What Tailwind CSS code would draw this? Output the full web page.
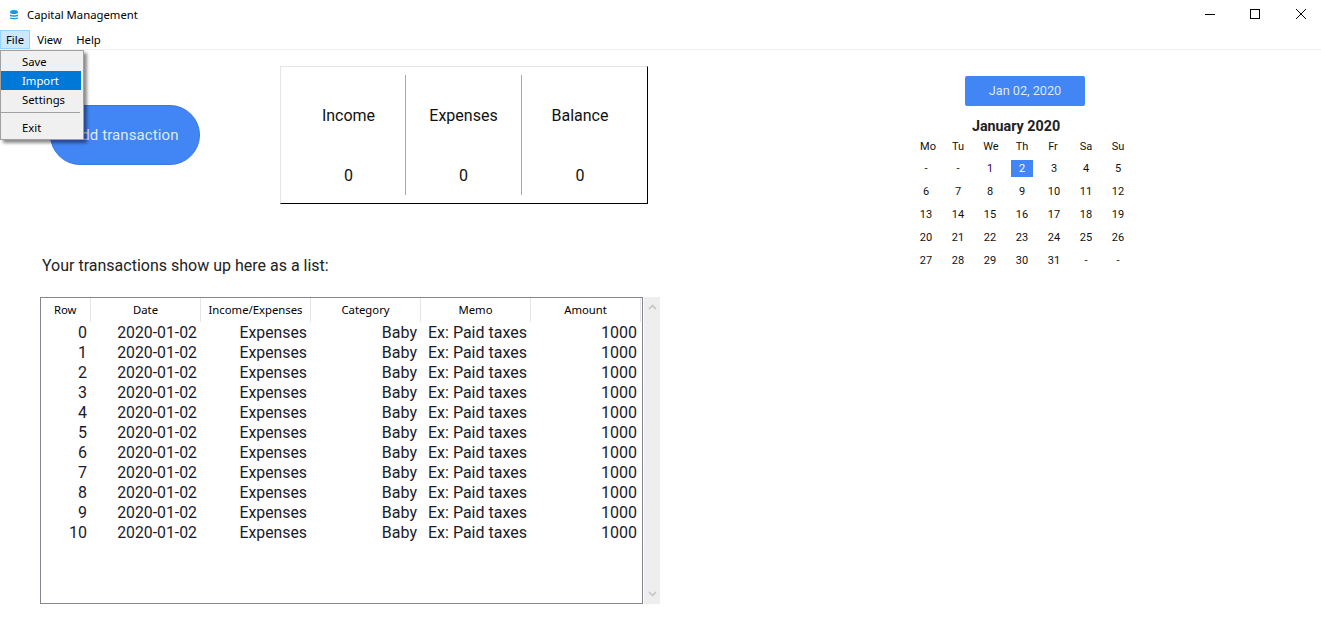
<!DOCTYPE html>
<html lang="en">
<head>
  <meta charset="UTF-8" />
  <title>Capital Management</title>
  <script src="https://cdn.jsdelivr.net/npm/@tailwindcss/browser@4"></script>
</head>
<body class="bg-white h-[631px] w-[1321px] overflow-hidden font-['Roboto',sans-serif] text-[#111]">
  <!-- title bar -->
  <header class="h-[30px] flex items-center font-['Noto_Sans',sans-serif] text-[11.3px] text-black">
    <svg class="ml-[8px] w-[12px] h-[12px]" viewBox="0 0 12 12">
      <ellipse cx="6" cy="3" rx="4" ry="2" fill="#1a97e0" />
      <path d="M2 5.200c1 1.300 7 1.300 8 0v1.600c-1 1.300-7 1.300-8 0z" fill="#1a97e0" />
      <path d="M2 8c1 1.300 7 1.300 8 0v1.200c-1 1.500-7 1.500-8 0z" fill="#1a97e0" />
    </svg>
    <span class="ml-[7px]">Capital Management</span>
    <div class="ml-auto flex items-center">
      <svg class="w-[46px] h-[30px]" viewBox="0 0 46 30"><path d="M22 14.500h10" stroke="#000" fill="none" /></svg>
      <svg class="w-[46px] h-[30px]" viewBox="0 0 46 30"><rect x="21.500" y="9.500" width="9" height="9" stroke="#000" fill="none" /></svg>
      <svg class="w-[46px] h-[30px]" viewBox="0 0 46 30"><path d="M21 9l10 10M31 9l-10 10" stroke="#000" fill="none" /></svg>
    </div>
  </header>

  <!-- menu bar -->
  <nav class="h-[20px] flex border-b border-[#f0f0f0] font-['Noto_Sans',sans-serif] text-[11.3px] text-black">
    <div class="w-[30px] h-[19px] pt-[2px] flex items-center justify-center bg-[#cce8ff] border border-[#99d1ff]">File</div>
    <div class="w-[39px] h-[19px] pt-[2px] flex items-center justify-center">View</div>
    <div class="w-[39px] h-[19px] pt-[2px] flex items-center justify-center">Help</div>
  </nav>

  <div class="relative flex">
    <!-- file menu -->
    <div class="absolute left-0 top-0 z-10 w-[84px] h-[90px] pt-px bg-[#f0f0f0] border border-[#a0a0a0] shadow-[3px_3px_3px_rgba(0,0,0,0.45)] font-['Noto_Sans',sans-serif] text-[11.3px] text-black">
      <div class="h-[19px] pt-[2px] pl-[21px] flex items-center">Save</div>
      <div class="h-[19px] pt-[2px] w-[80px] pl-[21px] flex items-center bg-[#0078d7] text-white">Import</div>
      <div class="h-[19px] pt-[2px] pl-[21px] flex items-center">Settings</div>
      <div class="mt-[3px] mb-[5px] h-px w-[79px] bg-[#a0a0a0]"></div>
      <div class="h-[19px] pt-[2px] pl-[21px] flex items-center">Exit</div>
    </div>

    <!-- left side -->
    <main class="w-[660px] shrink-0">
      <div class="flex pt-[16px]">
        <button class="ml-[50px] mt-[39px] w-[150px] h-[60px] rounded-[30px] bg-[#4285f4] border border-[#3b78dc] text-[#dfe9fb] text-[15px] tracking-[0.1px]">Add transaction</button>
        <section class="ml-[80px] w-[368px] h-[138px] flex px-px pt-[8px] pb-[8px] border-t border-l border-t-[#e5e5e5] border-l-[#e5e5e5] border-r border-b border-r-black border-b-black">
          <div class="w-[124px] pl-[10px] flex flex-col items-center text-[16px] leading-[24px] border-r border-[#a8a8a8]">
            <span class="mt-[29px]">Income</span>
            <span class="mt-[36px]">0</span>
          </div>
          <div class="w-[116px] flex flex-col items-center text-[16px] leading-[24px] border-r border-[#a8a8a8]">
            <span class="mt-[29px]">Expenses</span>
            <span class="mt-[36px]">0</span>
          </div>
          <div class="w-[116px] flex flex-col items-center text-[16px] leading-[24px]">
            <span class="mt-[29px]">Balance</span>
            <span class="mt-[36px]">0</span>
          </div>
        </section>
      </div>

      <p class="ml-[42px] mt-[52px] text-[16px] leading-[20px] text-[#222]">Your transactions show up here as a list:</p>

      <div class="ml-[40px] mt-[21px] flex">
        <div class="w-[603px] h-[307px] border border-[#85858f] bg-white">
          <table class="table-fixed border-collapse w-[599px] text-[16px] leading-[19px] text-[#1a1a2a]">
            <thead>
              <tr class="h-[24px] font-['Noto_Sans',sans-serif] text-[11.3px] text-black">
                <th class="w-[49px] pb-[2px] font-normal border-r border-[#e5e5e5]">Row</th>
                <th class="w-[110px] pb-[2px] pl-px font-normal border-r border-[#e5e5e5]">Date</th>
                <th class="w-[110px] pb-[2px] pl-px font-normal border-r border-[#e5e5e5]">Income/Expenses</th>
                <th class="w-[110px] pb-[2px] pl-px font-normal border-r border-[#e5e5e5]">Category</th>
                <th class="w-[110px] pb-[2px] pl-px font-normal border-r border-[#e5e5e5]">Memo</th>
                <th class="w-[110px] pb-[2px] pl-px font-normal border-r border-[#e5e5e5]">Amount</th>
              </tr>
            </thead>
            <tbody id="rows"></tbody>
          </table>
        </div>
        <div class="ml-px w-[16px] h-[307px] bg-[#eeeeee] flex flex-col items-center justify-between py-[7px]">
          <svg class="w-[9px] h-[6px]" viewBox="0 0 9 6"><path d="M1 5l3.500-3.500L8 5" stroke="#c2c2c2" stroke-width="1.500" fill="none" /></svg>
          <svg class="w-[9px] h-[6px]" viewBox="0 0 9 6"><path d="M1 1l3.500 3.500L8 1" stroke="#c2c2c2" stroke-width="1.500" fill="none" /></svg>
        </div>
      </div>
    </main>

    <!-- calendar -->
    <aside class="ml-[250px] w-[224px] pt-[26px]">
      <button class="ml-[55px] block w-[120px] h-[30px] rounded-[2px] bg-[#4285f4] text-[#dfe9fb] text-[12.7px]">Jan 02, 2020</button>
      <div class="ml-[62px] mt-[12px] w-[88px] h-[17px] pt-px flex items-center justify-center whitespace-nowrap text-[14.300px] font-bold text-[#222]">January 2020</div>
      <div id="cal" class="mt-px grid grid-cols-[repeat(7,32px)] text-[11px] text-center items-center text-[#111]">
        <div class="h-[21px] leading-[21px] pl-[4px]">Mo</div>
        <div class="h-[21px] leading-[21px]">Tu</div>
        <div class="h-[21px] leading-[21px] pl-[2px]">We</div>
        <div class="h-[21px] leading-[21px]">Th</div>
        <div class="h-[21px] leading-[21px] pr-[2px]">Fr</div>
        <div class="h-[21px] leading-[21px]">Sa</div>
        <div class="h-[21px] leading-[21px]">Su</div>
      </div>
    </aside>
  </div>

  <script>
    const rows = document.getElementById('rows');
    for (let i = 0; i <= 10; i++) {
      rows.insertAdjacentHTML('beforeend', `<tr class="h-[20px]">
        <td class="text-right pt-px pr-[3px]">${i}</td>
        <td class="text-right pt-px pr-[3px] text-[15.800px]">2020-01-02</td>
        <td class="text-right pt-px pr-[3px] text-[15.800px]">Expenses</td>
        <td class="text-right pt-px pr-[3px]">Baby</td>
        <td class="text-left pt-px pl-[8px]">Ex: Paid taxes</td>
        <td class="text-right pt-px pr-[3px]">1000</td>
      </tr>`);
    }

    const cal = document.getElementById('cal');
    const days = ['-', '-', 1, 2, 3, 4, 5, 6, 7, 8, 9, 10, 11, 12, 13, 14, 15, 16, 17, 18, 19, 20, 21, 22, 23, 24, 25, 26, 27, 28, 29, 30, 31, '-', '-'];
    days.forEach(d => {
      let cell = `<div class="h-[23px] leading-[23px]">${d}</div>`;
      if (d === 1) cell = `<div class="h-[23px] leading-[23px] text-[#40005a]">${d}</div>`;
      if (d === 2) cell = `<div class="mx-[5px] h-[17px] leading-[17px] bg-[#4285f4] text-white">${d}</div>`;
      cal.insertAdjacentHTML('beforeend', cell);
    });
  </script>
</body>
</html>
